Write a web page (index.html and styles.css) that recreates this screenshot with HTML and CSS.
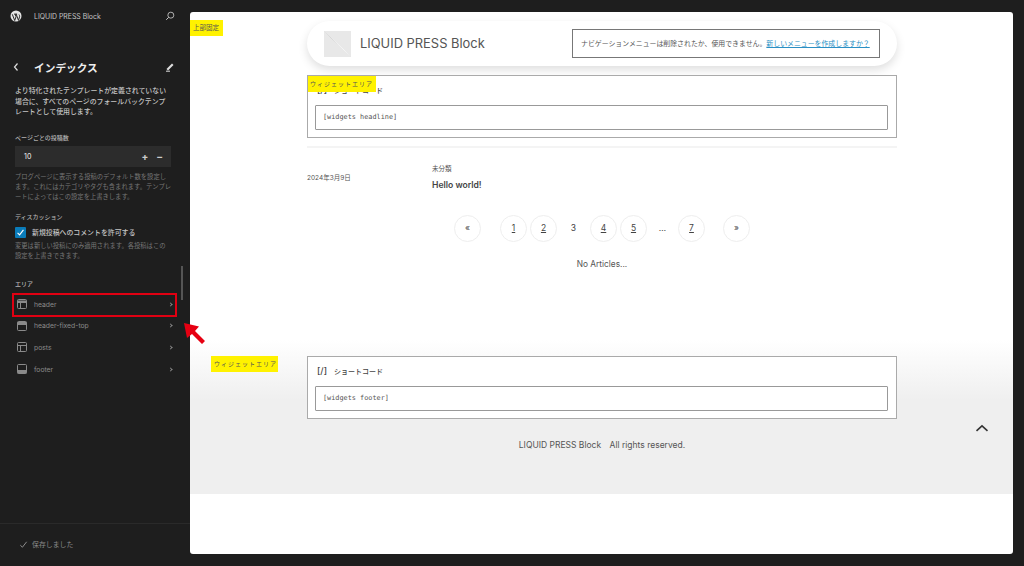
FILE: index.html
```html
<!DOCTYPE html>
<html lang="ja">
<head>
    <meta charset="UTF-8">
    <title>LIQUID PRESS Block</title>
    <link rel="stylesheet" href="styles.css">
</head>
<body>
    <aside class="sidebar">
        <div class="site-bar">
            <svg class="wp-logo" viewBox="0 0 24 24"><circle cx="12" cy="12" r="11" fill="#e6e6e6"/><path d="M4.6 8.6 9.4 21l2.7-7.6-2-5.2M10 8.2h-1.800M10 8.200h4.200M12.300 8.200 17 20.800l2-6.600c.8-2.600-.2-3.800-1-5.200" fill="none" stroke="#1e1e1e" stroke-width="1.900"/></svg>
            <span class="site-name">LIQUID PRESS Block</span>
            <svg class="search-icon" viewBox="0 0 12 12"><circle cx="7" cy="5" r="3.600" fill="none" stroke="#ccc" stroke-width="1"/><path d="M4.400 7.600 1.500 10.500" stroke="#ccc" stroke-width="1.200"/></svg>
        </div>

        <div class="title-row">
            <svg class="back-icon" viewBox="0 0 8 10"><path d="M5.500 1.500 2.500 5l3 3.500" fill="none" stroke="#ddd" stroke-width="1.200"/></svg>
            <h1>インデックス</h1>
            <svg class="edit-icon" viewBox="0 0 10 10"><path d="M1.500 7 7 1.500l1.500 1.500L3 8.500z" fill="#ddd"/><path d="M1 9.200h4" stroke="#ddd" stroke-width="1"/></svg>
        </div>

        <p class="lead">より特化されたテンプレートが定義されていない場合に、すべてのページのフォールバックテンプレートとして使用します。</p>

        <h2 class="side-label label-posts">ページごとの投稿数</h2>
        <div class="number-field">
            <span>10</span>
            <span class="steppers"><b>+</b><b>−</b></span>
        </div>
        <p class="help help-posts">ブログページに表示する投稿のデフォルト数を設定します。これにはカテゴリやタグも含まれます。テンプレートによってはこの設定を上書きします。</p>

        <h2 class="side-label label-discuss">ディスカッション</h2>
        <div class="check-row">
            <span class="checkbox"><svg viewBox="0 0 12 12"><path d="M2.800 6.300 5 8.600l4.200-5.400" fill="none" stroke="#fff" stroke-width="1.200"/></svg></span>
            <span>新規投稿へのコメントを許可する</span>
        </div>
        <p class="help help-discuss">変更は新しい投稿にのみ適用されます。各投稿はこの設定を上書きできます。</p>

        <h2 class="side-label label-area">エリア</h2>
        <ul class="area-list">
            <li class="area-item">
                <svg viewBox="0 0 10 10"><rect x=".5" y=".5" width="9" height="9" rx="1" fill="none" stroke="#8a8a8a"/><path d="M.5 1.500h9v2.500h-9z" fill="#8a8a8a"/><path d="M3.500 4v5" stroke="#8a8a8a"/></svg>
                <span>header</span><i class="chev"></i>
            </li>
            <li class="area-item">
                <svg viewBox="0 0 10 10"><rect x=".5" y=".5" width="9" height="9" rx="1" fill="none" stroke="#8a8a8a"/><path d="M.5 1h9v3h-9z" fill="#8a8a8a"/></svg>
                <span>header-fixed-top</span><i class="chev"></i>
            </li>
            <li class="area-item">
                <svg viewBox="0 0 10 10"><rect x=".5" y=".5" width="9" height="9" rx="1" fill="none" stroke="#8a8a8a"/><path d="M.5 3.500h9M3.500 3.500v6" stroke="#8a8a8a"/></svg>
                <span>posts</span><i class="chev"></i>
            </li>
            <li class="area-item">
                <svg viewBox="0 0 10 10"><rect x=".5" y=".5" width="9" height="9" rx="1" fill="none" stroke="#8a8a8a"/><path d="M.5 6h9v3.500h-9z" fill="#8a8a8a"/></svg>
                <span>footer</span><i class="chev"></i>
            </li>
        </ul>

        <div class="save-bar">
            <svg viewBox="0 0 10 10"><path d="M1.500 5.800 3.800 8 8.500 2" fill="none" stroke="#999" stroke-width="1"/></svg>
            <span>保存しました</span>
        </div>
        <div class="scroll-thumb"></div>
    </aside>

    <main class="canvas">
        <span class="marker marker-fixed">上部固定</span>

        <div class="column">
            <header class="site-header">
                <div class="logo-box"></div>
                <div class="logo-text">LIQUID PRESS Block</div>
                <div class="nav-notice">ナビゲーションメニューは削除されたか、使用できません。<a href="#">新しいメニューを作成しますか？</a></div>
            </header>

            <section class="widget widget-head">
                <span class="marker marker-widget">ウィジェットエリア</span>
                <div class="widget-title"><span class="sc-icon">[/]</span>ショートコード</div>
                <div class="widget-input">[widgets headline]</div>
            </section>

            <hr class="divider">

            <article class="post-row">
                <time class="post-date">2024年3月9日</time>
                <div class="post-body">
                    <div class="post-cat">未分類</div>
                    <div class="post-title">Hello world!</div>
                </div>
            </article>

            <nav class="pager">
                <span class="page page-prev">«</span>
                <a class="page" href="#">1</a>
                <a class="page" href="#">2</a>
                <span class="page plain">3</span>
                <a class="page" href="#">4</a>
                <a class="page" href="#">5</a>
                <span class="page plain page-dots">…</span>
                <a class="page" href="#">7</a>
                <span class="page page-next">»</span>
            </nav>

            <p class="no-articles">No Articles...</p>
        </div>

        <footer class="site-footer">
            <span class="marker marker-footer">ウィジェットエリア</span>
            <div class="column">
                <section class="widget">
                    <div class="widget-title"><span class="sc-icon">[/]</span>ショートコード</div>
                    <div class="widget-input">[widgets footer]</div>
                </section>
                <p class="copyright">LIQUID PRESS Block　All rights reserved.</p>
            </div>
            <svg class="to-top" viewBox="0 0 14 8"><path d="M1.500 6.800 7 1.800l5.500 5" fill="none" stroke="#333" stroke-width="1.600"/></svg>
        </footer>
    </main>

    <div class="red-box"></div>
    <svg class="red-arrow" viewBox="0 0 24 24"><path d="M1 1 16 4.500 12 9 22 19 19 22 9 12 4 16z" fill="#e60012"/></svg>
</body>
</html>
```

FILE: styles.css
```css
* {
    box-sizing: border-box;
}
body {
    margin: 0;
    height: 566px;
    overflow: hidden;
    display: flex;
    background: #1e1e1e;
    font-family: Inter, 'Noto Sans CJK JP', sans-serif;
    color: #444;
}

/* sidebar */
.sidebar {
    width: 190px;
    height: 566px;
    flex: none;
    display: flex;
    flex-direction: column;
    position: relative;
    color: #ccc;
}
.site-bar {
    display: flex;
    align-items: center;
    height: 32px;
    padding: 0 15px 0 10px;
}
.wp-logo {
    width: 12px;
    height: 12px;
    margin-right: 12px;
}
.site-name {
    flex: 1;
    font-size: 6.900px;
    color: #c4c4c4;
}
.search-icon {
    width: 10px;
    height: 10px;
}
.title-row {
    display: flex;
    align-items: center;
    height: 20px;
    margin-top: 25px;
    padding: 0 15px 0 12px;
}
.back-icon {
    width: 8px;
    height: 10px;
    margin-right: 14px;
}
.title-row h1 {
    flex: 1;
    margin: 0;
    font-size: 10.7px;
    font-weight: 700;
    color: #eee;
}
.edit-icon {
    width: 10px;
    height: 10px;
}
.lead {
    margin: 9px 15px 0;
    width: 156px;
    font-size: 6.9px;
    line-height: 10.5px;
    font-weight: 500;
    color: #c4c4c4;
}
.side-label {
    margin: 0 15px;
    font-size: 6px;
    line-height: 10px;
    font-weight: 500;
    color: #b4b4b4;
}
.label-posts {
    margin-top: 15px;
}
.label-discuss {
    margin-top: 10px;
}
.label-area {
    margin-top: 18px;
}
.number-field {
    display: flex;
    justify-content: space-between;
    align-items: center;
    height: 21px;
    margin: 3px 19px 0 15px;
    padding: 0 9px;
    background: #2c2c2c;
    font-size: 7px;
    font-weight: 500;
    color: #ddd;
}
.steppers {
    display: flex;
    gap: 8px;
    margin-right: -1px;
    font-size: 10px;
    color: #ccc;
}
.help {
    margin: 5px 15px 0;
    width: 156px;
    font-size: 6.3px;
    line-height: 10px;
    color: #777;
}
.help-discuss {
    margin-top: 3px;
}
.check-row {
    display: flex;
    align-items: center;
    gap: 6px;
    height: 11px;
    margin: 5px 15px 0;
    font-size: 6.9px;
    font-weight: 500;
    color: #c4c4c4;
}
.checkbox {
    width: 11px;
    height: 11px;
    border-radius: 1px;
    background: #0a7cba;
}
.checkbox svg {
    display: block;
}
.area-list {
    list-style: none;
    margin: 5px 0 0;
    padding: 0;
}
.area-item {
    display: flex;
    align-items: center;
    height: 21.6px;
    padding: 0 19px 0 17px;
    font-size: 6.800px;
    color: #8a8a8a;
}
.area-item svg {
    width: 10px;
    height: 10px;
    margin-right: 7px;
}
.area-item span {
    flex: 1;
}
.chev {
    width: 3px;
    height: 3px;
    margin-right: -1px;
    border-top: 1px solid #888;
    border-right: 1px solid #888;
    transform: rotate(45deg);
}
.save-bar {
    display: flex;
    align-items: center;
    gap: 4px;
    height: 43px;
    margin-top: auto;
    padding: 0 20px 2px 19px;
    border-top: 1px solid #2a2a2a;
    font-size: 6.9px;
    color: #8a8a8a;
}
.save-bar svg {
    width: 9px;
    height: 9px;
}
.scroll-thumb {
    position: absolute;
    left: 181px;
    top: 266px;
    width: 2px;
    height: 34px;
    background: #555;
}
.red-box {
    position: absolute;
    left: 12px;
    top: 293px;
    width: 165px;
    height: 24px;
    border: 2px solid #e00012;
}
.red-arrow {
    position: absolute;
    left: 183px;
    top: 322px;
    width: 24px;
    height: 24px;
}

/* page preview */
.canvas {
    position: relative;
    width: 823px;
    height: 542px;
    margin-top: 12px;
    display: flex;
    flex-direction: column;
    background: #fff;
    border-radius: 3px;
    overflow: hidden;
}
.column {
    width: 590px;
    margin-left: 117px;
}
.marker {
    position: absolute;
    height: 16px;
    padding: 0 2px;
    background: #fff200;
    font-size: 6px;
    line-height: 16px;
    letter-spacing: 1px;
    white-space: nowrap;
    color: #555;
}
.marker-fixed {
    left: 0;
    top: 8px;
    width: 33px;
    padding: 0 3px;
    font-size: 6.500px;
    letter-spacing: 0;
}
.marker-widget {
    left: 0;
    top: 0;
    width: 68px;
}
.marker-footer {
    left: 21px;
    top: 16px;
    width: 67px;
    padding-left: 3px;
}
.site-header {
    display: flex;
    align-items: center;
    height: 45px;
    margin-top: 9px;
    padding: 0 17px;
    border-radius: 23px;
    background: #fff;
    box-shadow: 0 4px 10px rgba(0, 0, 0, 0.13);
}
.logo-box {
    width: 27px;
    height: 26px;
    margin-right: 9px;
    background: linear-gradient(to top right, #e8e8e8 49%, #d6d6d6 49.5%, #f6f6f6 50.5%, #e8e8e8 51.5%);
}
.logo-text {
    flex: 1;
    font-size: 12.900px;
    color: #555;
}
.nav-notice {
    width: 308px;
    height: 29px;
    border: 1px solid #777;
    padding: 0 8px;
    font-size: 6.900px;
    line-height: 27px;
    white-space: nowrap;
    color: #555;
}
.nav-notice a {
    color: #2a8fc4;
}
.widget {
    position: relative;
    height: 63px;
    padding: 0 8px 0 7px;
    border: 1px solid #aaa;
    background: #fff;
}
.widget-head {
    margin-top: 9px;
}
.widget-title {
    height: 29px;
    padding-left: 2px;
    font-size: 7px;
    font-weight: 500;
    line-height: 27px;
    color: #444;
}
.sc-icon {
    margin: 0 7px 0 0;
    font-size: 9px;
}
.widget-input {
    height: 25px;
    padding: 0 7px;
    border: 1px solid #999;
    border-radius: 1px;
    background: #fff;
    font-family: 'DejaVu Sans Mono', monospace;
    font-size: 6.850px;
    line-height: 23px;
    color: #555;
}
.divider {
    height: 2px;
    margin: 8px 0 0;
    border: 0;
    background: #f4f4f4;
}
.post-row {
    display: flex;
    align-items: center;
    margin-top: 15px;
}
.post-date {
    width: 125px;
    font-size: 6.500px;
    color: #555;
}
.post-cat {
    font-size: 6.500px;
    line-height: 12px;
    color: #555;
}
.post-title {
    margin-top: 4px;
    font-size: 8.600px;
    font-weight: 600;
    line-height: 12px;
    color: #444;
}
.pager {
    display: flex;
    align-items: center;
    gap: 3px;
    margin-top: 24px;
    padding-left: 147px;
    font-size: 8.500px;
    color: #444;
}
.page {
    width: 27px;
    height: 27px;
    border: 1px solid #eee;
    border-radius: 50%;
    text-align: center;
    line-height: 25px;
    color: #444;
}
.page.plain {
    border-color: transparent;
}
.page-dots {
    width: 25px;
}
.page-prev {
    margin-right: 16px;
}
.page-next {
    margin-left: 15px;
}
.no-articles {
    margin: 16px 0 0;
    font-size: 8.300px;
    line-height: 12px;
    text-align: center;
    color: #555;
}
.site-footer {
    position: relative;
    height: 154px;
    margin-top: 70px;
    padding-top: 16px;
    background: linear-gradient(#fff 0, #efefef 60px);
}
.copyright {
    margin: 20px 0 0;
    font-size: 8.500px;
    line-height: 12px;
    text-align: center;
    color: #555;
}
.to-top {
    position: absolute;
    left: 785px;
    top: 84px;
    width: 14px;
    height: 8px;
}
```
